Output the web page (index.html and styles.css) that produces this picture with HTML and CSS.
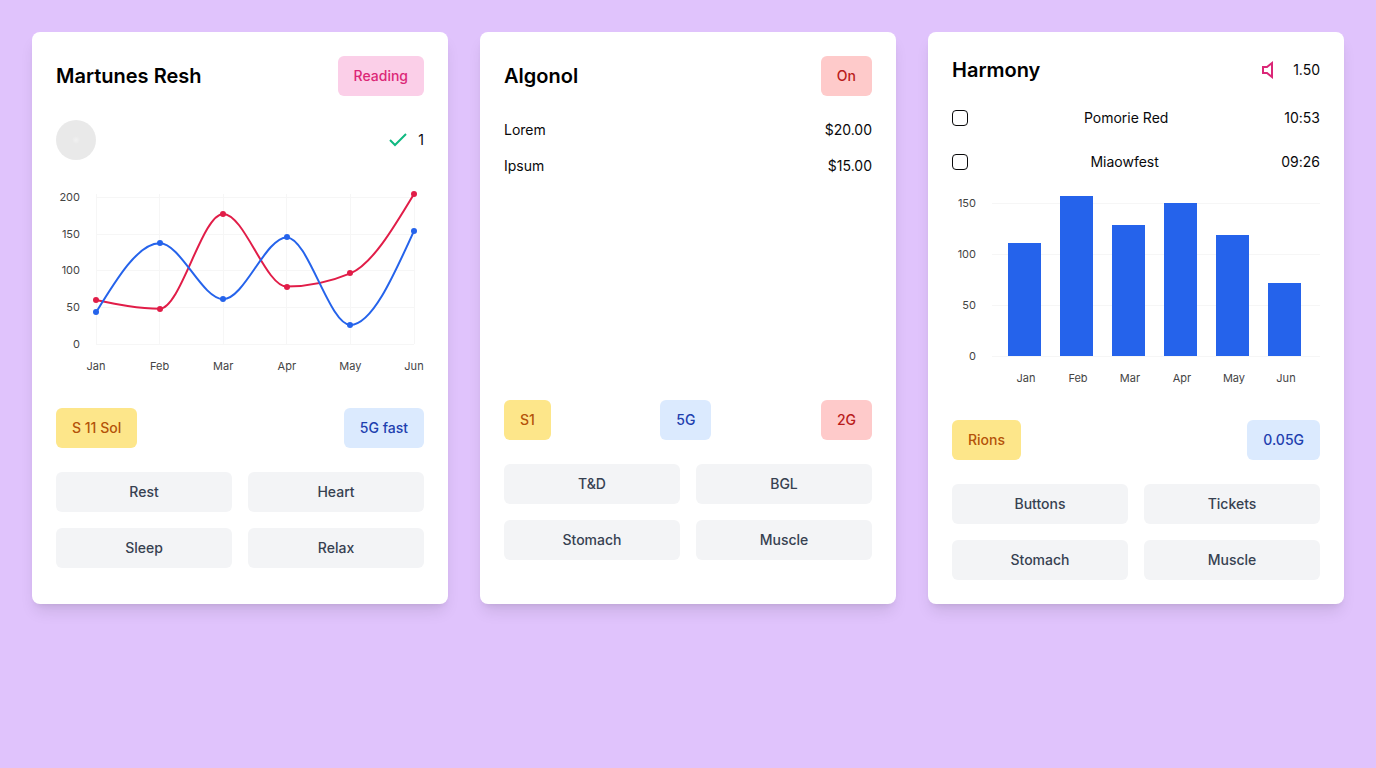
FILE: index.html
```html
<!DOCTYPE html>
<html lang="en">
<head>
<meta charset="utf-8">
<meta name="viewport" content="width=device-width, initial-scale=1">
<title>Dashboard</title>
<link rel="stylesheet" href="styles.css">
</head>
<body>
<main class="board">
  <section class="card">
    <header class="row">
      <h2 class="title">Martunes Resh</h2>
      <button class="pill pink" type="button">Reading</button>
    </header>
    <div class="row">
      <span class="avatar"></span>
      <span class="stat">
        <svg class="icon check" viewBox="0 0 24 24" aria-hidden="true"><path d="M20 6 9 17l-5-5"/></svg>
        1
      </span>
    </div>
    <svg class="chart" viewBox="0 0 368 200" role="img" aria-label="Monthly line chart">
      <g class="grid">
        <path d="M40 13.5H358M40 50.5H358M40 86.5H358M40 123.5H358M40 160.5H358"/>
        <path d="M40.5 10V160M103.5 10V160M167.5 10V160M230.5 10V160M294.5 10V160M358.5 10V160"/>
      </g>
      <g class="axis-y">
        <text x="24" y="17">200</text><text x="24" y="54">150</text><text x="24" y="90">100</text><text x="24" y="127">50</text><text x="24" y="164">0</text>
      </g>
      <g class="axis-x">
        <text x="40" y="186">Jan</text><text x="103.6" y="186">Feb</text><text x="167.2" y="186">Mar</text><text x="230.8" y="186">Apr</text><text x="294.4" y="186">May</text><text x="358" y="186">Jun</text>
      </g>
      <path class="line red-line" d="M40 115.9C61.2 120.3 82.4 124.7 103.6 124.7C124.8 124.7 146 29.9 167.2 29.9C188.4 29.9 209.6 102.6 230.8 102.6C252 102.6 273.2 98.2 294.4 89.4C315.6 80.6 336.8 45.3 358 10"/>
      <path class="line blue-line" d="M40 128.4C61.2 93.85 82.4 59.3 103.6 59.3C124.8 59.3 146 115.1 167.2 115.1C188.4 115.1 209.6 53.4 230.8 53.4C252 53.4 273.2 140.9 294.4 140.9C315.6 140.9 336.8 93.85 358 46.8"/>
      <g class="red-dots">
        <circle cx="40" cy="116" r="3"/><circle cx="104" cy="125" r="3"/><circle cx="167" cy="30" r="3"/><circle cx="231" cy="103" r="3"/><circle cx="294" cy="89" r="3"/><circle cx="358" cy="10" r="3"/>
      </g>
      <g class="blue-fill">
        <circle cx="40" cy="128" r="3"/><circle cx="104" cy="59" r="3"/><circle cx="167" cy="115" r="3"/><circle cx="231" cy="53" r="3"/><circle cx="294" cy="141" r="3"/><circle cx="358" cy="47" r="3"/>
      </g>
    </svg>
    <div class="row">
      <button class="pill yellow" type="button">S 11 Sol</button>
      <button class="pill blue" type="button">5G fast</button>
    </div>
    <div class="actions">
      <button class="pill gray" type="button">Rest</button>
      <button class="pill gray" type="button">Heart</button>
      <button class="pill gray" type="button">Sleep</button>
      <button class="pill gray" type="button">Relax</button>
    </div>
  </section>

  <section class="card">
    <header class="row">
      <h2 class="title">Algonol</h2>
      <button class="pill red" type="button">On</button>
    </header>
    <div class="prices">
      <div class="row"><span>Lorem</span><span>$20.00</span></div>
      <div class="row"><span>Ipsum</span><span>$15.00</span></div>
    </div>
    <div class="summary">
      <div class="chart"></div>
      <div class="row">
        <button class="pill yellow" type="button">S1</button>
        <button class="pill blue" type="button">5G</button>
        <button class="pill red" type="button">2G</button>
      </div>
    </div>
    <div class="actions">
      <button class="pill gray" type="button">T&amp;D</button>
      <button class="pill gray" type="button">BGL</button>
      <button class="pill gray" type="button">Stomach</button>
      <button class="pill gray" type="button">Muscle</button>
    </div>
  </section>

  <section class="card">
    <header class="row">
      <h2 class="title">Harmony</h2>
      <span class="stat">
        <svg class="icon volume" viewBox="0 0 24 24" aria-hidden="true"><path d="M11 5 6 9H2v6h4l5 4z"/></svg>
        1.50
      </span>
    </header>
    <div class="row">
      <input class="tick" type="checkbox" id="pomorie">
      <label for="pomorie">Pomorie Red</label>
      <span>10:53</span>
    </div>
    <div class="row">
      <input class="tick" type="checkbox" id="miaowfest">
      <label for="miaowfest">Miaowfest</label>
      <span>09:26</span>
    </div>
    <svg class="chart" viewBox="0 0 368 200" role="img" aria-label="Monthly bar chart">
      <path class="grid" d="M40 7.5H368M40 58.5H368M40 109.5H368M40 160.5H368"/>
      <g class="axis-y">
        <text x="24" y="11">150</text><text x="24" y="62">100</text><text x="24" y="113">50</text><text x="24" y="164">0</text>
      </g>
      <g class="axis-x">
        <text x="74" y="186">Jan</text><text x="126" y="186">Feb</text><text x="178" y="186">Mar</text><text x="230" y="186">Apr</text><text x="282" y="186">May</text><text x="334" y="186">Jun</text>
      </g>
      <g class="blue-fill">
        <rect x="56" y="47" width="33" height="113"/><rect x="108" y="0" width="33" height="160"/><rect x="160" y="29" width="33" height="131"/><rect x="212" y="7" width="33" height="153"/><rect x="264" y="39" width="33" height="121"/><rect x="316" y="87" width="33" height="73"/>
      </g>
    </svg>
    <div class="row">
      <button class="pill yellow" type="button">Rions</button>
      <button class="pill blue" type="button">0.05G</button>
    </div>
    <div class="actions">
      <button class="pill gray" type="button">Buttons</button>
      <button class="pill gray" type="button">Tickets</button>
      <button class="pill gray" type="button">Stomach</button>
      <button class="pill gray" type="button">Muscle</button>
    </div>
  </section>
</main>
</body>
</html>
```
FILE: styles.css
```css
* {
  box-sizing: border-box;
}

body {
  margin: 0;
  background: #e0c3fc;
  color: #09090b;
  font: 14px/20px Inter, sans-serif;
  font-feature-settings: "calt" 0;
}

.board {
  display: grid;
  grid-template-columns: repeat(3, minmax(0, 1fr));
  gap: 32px;
  padding: 32px;
}

.card {
  display: flex;
  flex-direction: column;
  gap: 24px;
  padding: 24px;
  border-radius: 8px;
  background: #fff;
  box-shadow: 0 10px 15px -3px rgb(0 0 0 / 10%), 0 4px 6px -4px rgb(0 0 0 / 10%);
}

.row {
  display: flex;
  align-items: center;
  justify-content: space-between;
}

.title {
  margin: 0;
  color: #000;
  font-size: 20px;
  font-weight: 600;
  line-height: 28px;
}

.pill {
  height: 40px;
  padding: 0 16px;
  border: 0;
  border-radius: 6px;
  font: inherit;
  font-weight: 500;
  cursor: pointer;
}

.pink { background: #fbcfe8; color: #db2777; }
.red { background: #fecaca; color: #b91c1c; }
.yellow { background: #fde68a; color: #b45309; }
.blue { background: #dbeafe; color: #1e40af; }
.gray { background: #f3f4f6; color: #374151; }

.avatar {
  width: 40px;
  height: 40px;
  border-radius: 50%;
  background: radial-gradient(circle, #f1f1f1 0, #e9e9e9 4px);
}

.stat {
  display: flex;
  align-items: center;
  gap: 8px;
}

.icon {
  width: 24px;
  height: 24px;
  fill: none;
  stroke-width: 2;
}

.check { stroke: #10b981; }
.volume { stroke: #db2777; }

.prices {
  display: grid;
  gap: 16px;
}

.tick {
  appearance: none;
  width: 16px;
  height: 16px;
  margin: 0;
  border: 1px solid #09090b;
  border-radius: 4px;
}

.tick:checked {
  background: #09090b;
}

.chart {
  display: block;
  width: 100%;
  aspect-ratio: 368 / 200;
  overflow: visible;
}

.grid {
  fill: none;
  stroke: #f6f6f6;
  stroke-width: 1;
}

.axis-x,
.axis-y {
  fill: #444;
  font-size: 11px;
}

.axis-x { text-anchor: middle; }
.axis-y { text-anchor: end; }

.line {
  fill: none;
  stroke-width: 2;
}

.red-line { stroke: #e11d48; }
.blue-line { stroke: #2563eb; }
.red-dots { fill: #e11d48; }
.blue-fill { fill: #2563eb; }

.actions {
  display: grid;
  grid-template-columns: repeat(2, minmax(0, 1fr));
  gap: 16px;
}
```
